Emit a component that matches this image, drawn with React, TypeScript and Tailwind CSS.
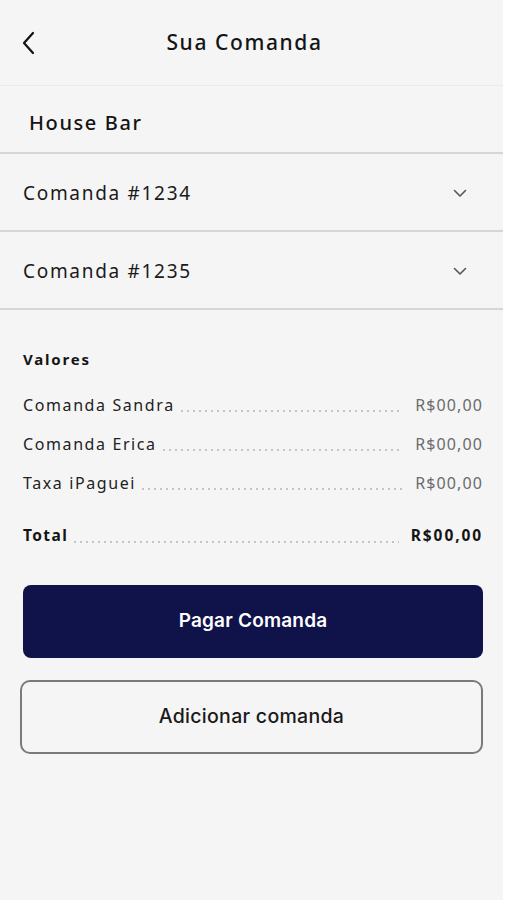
import React from "react";

const rows = [
	{ label: "Comanda Sandra", value: "R$00,00" },
	{ label: "Comanda Erica", value: "R$00,00" },
	{ label: "Taxa iPaguei", value: "R$00,00" },
];

const Chevron = () => (
	<svg width="14" height="9" viewBox="0 0 14 9" fill="none">
		<path d="M1.5 1.5 7 7l5.5-5.5" stroke="#555" strokeWidth="1.6" strokeLinecap="round" strokeLinejoin="round" />
	</svg>
);

const Leader = () => (
	<div className="flex-1 mx-1 h-[2px] self-end mb-[5px] bg-[radial-gradient(circle,#c4c4c4_0.8px,transparent_1px)] bg-[length:6px_2px]" />
);

const App = () => {
	return (
		<div className="flex min-h-[900px] w-full bg-white font-['Noto_Sans',sans-serif] text-[#141414]">
			<div className="w-[503px] min-h-[900px] bg-[#f5f5f5] flex flex-col">
				{/* header */}
				<header className="relative h-[86px] flex items-center justify-center border-b border-[#ebebeb]">
					<button type="button" className="absolute left-[20px] top-[31px]">
						<svg width="18" height="24" viewBox="0 0 18 24" fill="none">
							<path d="M13 2 4 12l9 10" stroke="#111" strokeWidth="2.2" strokeLinecap="round" strokeLinejoin="round" />
						</svg>
					</button>
					<h1 className="text-[21px] font-medium tracking-[1.6px] ml-[-14px]">Sua Comanda</h1>
				</header>

				<div className="h-[68px] flex items-center pt-[8px] pl-[29px] border-b-2 border-[#d6d6d6]">
					<h2 className="text-[20px] font-medium tracking-[1.6px]">House Bar</h2>
				</div>

				{["Comanda #1234", "Comanda #1235"].map((c) => (
					<div
						key={c}
						className="h-[78px] flex items-center justify-between pt-[2px] pl-[23px] pr-[36px] border-b-2 border-[#d6d6d6]"
					>
						<span className="text-[19px] tracking-[1.7px] text-[#1a1a1a]">{c}</span>
						<Chevron />
					</div>
				))}

				<section className="px-[23px] pr-[20px] pt-[38px]">
					<h3 className="text-[15px] font-bold tracking-[1.8px] mb-[23px]">Valores</h3>
					<div className="flex flex-col gap-[16px]">
						{rows.map((r) => (
							<div key={r.label} className="flex items-end h-[23px] text-[16px]">
								<span className="text-[#222] tracking-[1.6px]">{r.label}</span>
								<Leader />
								<span className="text-[#6b6b6b] tracking-[1.1px] ml-2">{r.value}</span>
							</div>
						))}
					</div>
					<div className="flex items-end h-[23px] text-[15.5px] font-bold mt-[30px]">
						<span className="tracking-[1.4px]">Total</span>
						<Leader />
						<span className="ml-2 tracking-[1.9px]">R$00,00</span>
					</div>
				</section>

				<div className="px-[20px] pt-[37px] flex flex-col gap-[22px] font-['Inter',sans-serif]">
					<button
						type="button"
						className="ml-[3px] h-[73px] rounded-[8px] bg-[#10124a] text-white text-[19px] font-semibold tracking-[0.2px]"
					>
						Pagar Comanda
					</button>
					<button
						type="button"
						className="h-[74px] rounded-[10px] border-2 border-[#7a7a7a] text-[19.5px] font-medium tracking-[0.3px] text-[#1a1a1a]"
					>
						Adicionar comanda
					</button>
				</div>
			</div>
		</div>
	);
};

export default App;
